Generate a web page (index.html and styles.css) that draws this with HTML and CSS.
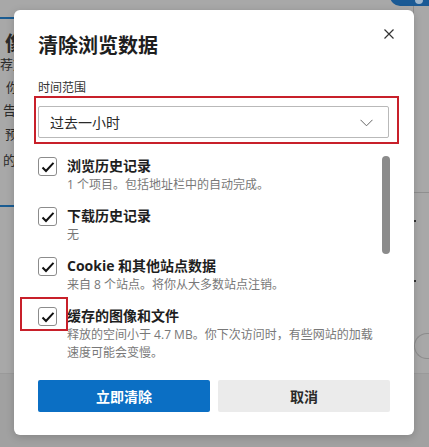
FILE: index.html
```html
<!DOCTYPE html>
<html>
<head>
	<title>清除浏览数据</title>
	<link rel="stylesheet" href="styles.css">
</head>
<body>
	<div class="page">
		<div class="pg-top">
			<div class="left">
				<div class="rule"></div>
				<div class="ln big">像</div>
				<div class="ln l1">荐)</div>
				<div class="ln l2">你</div>
				<div class="ln l3">告</div>
				<div class="ln l4">预</div>
				<div class="ln l5">的</div>
				<div class="rule r2"></div>
			</div>
			<div class="right">
				<div class="toggle"><span></span></div>
				<div class="card"></div>
				<div class="dot d1"></div>
				<div class="dot d2"></div>
				<div class="pill"></div>
			</div>
		</div>
		<div class="pg-bottom"></div>
	</div>

	<div class="dlg">
		<button class="close" aria-label="关闭">
			<svg width="10" height="10" viewBox="0 0 10 10"><path d="M0.5 0.5 L9.5 9.5 M9.5 0.5 L0.5 9.5" stroke="#333" stroke-width="1.2" fill="none"/></svg>
		</button>
		<h2 class="ttl">清除浏览数据</h2>
		<div class="lbl">时间范围</div>
		<div class="mark-box">
			<div class="sel">
				<span>过去一小时</span>
				<svg width="13" height="8" viewBox="0 0 13 8"><path d="M0.5 0.8 L6.5 6.8 L12.5 0.8" stroke="#666" stroke-width="1" fill="none"/></svg>
			</div>
		</div>

		<div class="list">
			<div class="items">
				<div class="item">
					<div class="cb"><svg width="14" height="12" viewBox="0 0 14 12"><path d="M1.5 6.5 L5 10 L12.5 1.8" stroke="#111" stroke-width="2" fill="none"/></svg></div>
					<div class="txt">
						<div class="it">浏览历史记录</div>
						<div class="ds">1 个项目。包括地址栏中的自动完成。</div>
					</div>
				</div>
				<div class="item">
					<div class="cb"><svg width="14" height="12" viewBox="0 0 14 12"><path d="M1.5 6.5 L5 10 L12.5 1.8" stroke="#111" stroke-width="2" fill="none"/></svg></div>
					<div class="txt">
						<div class="it">下载历史记录</div>
						<div class="ds">无</div>
					</div>
				</div>
				<div class="item">
					<div class="cb"><svg width="14" height="12" viewBox="0 0 14 12"><path d="M1.5 6.5 L5 10 L12.5 1.8" stroke="#111" stroke-width="2" fill="none"/></svg></div>
					<div class="txt">
						<div class="it">Cookie 和其他站点数据</div>
						<div class="ds">来自 8 个站点。将你从大多数站点注销。</div>
					</div>
				</div>
				<div class="item">
					<div class="cb marked"><svg width="14" height="12" viewBox="0 0 14 12"><path d="M1.5 6.5 L5 10 L12.5 1.8" stroke="#111" stroke-width="2" fill="none"/></svg></div>
					<div class="txt">
						<div class="it">缓存的图像和文件</div>
						<div class="ds">释放的空间小于 4.7 MB。你下次访问时，有些网站的加载速度可能会变慢。</div>
					</div>
				</div>
			</div>
			<div class="sbar"><div class="thumb"></div></div>
		</div>

		<div class="btns">
			<button class="btn pri">立即清除</button>
			<button class="btn sec">取消</button>
		</div>
	</div>
</body>
</html>
```

FILE: styles.css
```css
body{
	margin:0;
	background:#a8a8a8;
	font-family:"Open Sans","Noto Sans CJK SC",sans-serif;
	color:#222;
	overflow:hidden;
}
.page{
	height:447px;
	display:flex;
	flex-direction:column;
}
.pg-top{
	height:373px;
	display:flex;
	justify-content:space-between;
}
.pg-bottom{
	flex:1;
	background:#a1a1a1;
	border-top:1px solid #9a9a9a;
}

/* page behind the dialog */
.left{
	width:40px;
	overflow:hidden;
	color:#2b2b2b;
}
.rule{
	height:2px;
	background:#1a5c92;
	margin-top:17px;
}
.r2{
	margin-top:35px;
}
.ln{
	white-space:nowrap;
	font-size:13px;
	height:20px;
	line-height:20px;
}
.big{
	font-size:20px;
	font-weight:bold;
	margin-top:15px;
	padding-left:5px;
}
.l1{margin-top:0;padding-left:0;}
.l2{margin-top:3px;padding-left:6px;}
.l3{margin-top:3px;padding-left:3px;}
.l4{margin-top:4px;padding-left:5px;}
.l5{margin-top:6px;padding-left:3px;}

.right{
	width:39px;
	display:flex;
	flex-direction:column;
}
.toggle{
	height:20px;
	margin-top:-14px;
	border-radius:10px 0 0 10px;
	background:#1a5a95;
	position:relative;
}
.toggle span{
	position:absolute;
	left:25px;
	top:10px;
	width:8px;
	height:8px;
	border-radius:50%;
	background:#9fb6cc;
}
.card{
	height:186px;
	margin-left:23px;
	border-left:1px solid #8f8f8f;
	border-bottom:1px solid #8f8f8f;
}
.dot{
	width:2px;
	height:2px;
	background:#333;
	margin-left:24px;
}
.d1{margin-top:27px;}
.d2{margin-top:58px;}
.pill{
	height:24px;
	margin-top:51px;
	margin-left:24px;
	border:1px solid #8c8c8c;
	border-right:none;
	border-radius:13px 0 0 13px;
}

/* dialog */
.dlg{
	position:absolute;
	left:14px;
	top:10px;
	width:400px;
	height:425px;
	box-sizing:border-box;
	padding:22px 25px 24px 24px;
	background:#fff;
	border-radius:6px;
	box-shadow:0 2px 8px rgba(0,0,0,0.18);
}
.close{
	position:absolute;
	right:15px;
	top:14px;
	width:20px;
	height:20px;
	padding:0;
	border:none;
	background:none;
	display:flex;
	align-items:center;
	justify-content:center;
}
.ttl{
	margin:0;
	font-size:20px;
	line-height:28px;
	font-weight:bold;
	color:#1e1e1e;
}
.lbl{
	margin-top:20px;
	font-size:12px;
	line-height:16px;
	color:#333;
}
.mark-box{
	margin:0 -10px 0 -4px;
	border:2px solid #c8202a;
	padding:8px 8px 4px 2px;
}
.sel{
	height:32px;
	box-sizing:border-box;
	border:1px solid #b9b9b9;
	border-radius:2px;
	display:flex;
	align-items:center;
	justify-content:space-between;
	padding:0 15px 0 11px;
	font-size:14px;
	color:#2a2a2a;
}
.sel svg{
	margin-top:1px;
}

.list{
	display:flex;
	margin-top:12px;
	margin-right:-1px;
	gap:4px;
}
.items{
	flex:1;
	display:flex;
	flex-direction:column;
	gap:12px;
}
.item{
	display:flex;
	gap:10px;
}
.cb{
	width:19px;
	height:19px;
	margin-top:1px;
	flex:none;
	box-sizing:border-box;
	border:1px solid #8c8c8c;
	border-radius:3px;
	display:flex;
	align-items:center;
	justify-content:center;
	position:relative;
}
.cb.marked::after{
	content:"";
	position:absolute;
	left:-19px;
	top:-11px;
	width:44px;
	height:30px;
	border:2px solid #c8202a;
}
.it{
	font-size:14px;
	line-height:20px;
	font-weight:bold;
	color:#1e1e1e;
}
.ds{
	font-size:12px;
	line-height:18px;
	color:#787878;
}
.sbar{
	width:8px;
	flex:none;
}
.thumb{
	height:98px;
	border-radius:4px;
	background:#8b8b8b;
}

.btns{
	display:flex;
	gap:8px;
	margin-top:18px;
	margin-right:-1px;
}
.btn{
	flex:1;
	height:32px;
	border:none;
	border-radius:2px;
	font-family:"Open Sans","Noto Sans CJK SC",sans-serif;
	font-size:14px;
	font-weight:bold;
}
.pri{
	background:#0b6fc4;
	color:#fff;
}
.sec{
	background:#ebebeb;
	color:#2a2a2a;
}
```
